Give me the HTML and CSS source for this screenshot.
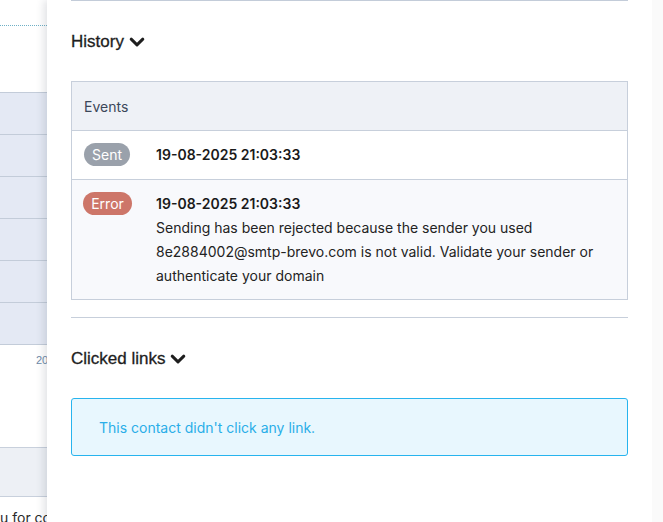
FILE: index.html
```html
<!DOCTYPE html>
<html>
<head>
<meta charset="utf-8">
<link rel="stylesheet" href="styles.css">
</head>
<body>
<div class="page">
  <div class="bg">
    <div class="bg-dots"></div>
    <div class="bg-rows">
      <div class="bg-row"></div>
      <div class="bg-row"></div>
      <div class="bg-row"></div>
      <div class="bg-row"></div>
      <div class="bg-row"></div>
      <div class="bg-row"></div>
    </div>
    <div class="bg-date">20</div>
    <div class="bg-footer"></div>
    <div class="bg-text">u for co</div>
  </div>
  <div class="drawer">
    <div class="section-top"></div>
    <h2 class="heading">History <svg class="chev" viewBox="0 0 16 11" width="16" height="11"><path d="M2.2 2.2 L8 7.8 L13.8 2.2" fill="none" stroke="#1e1e1e" stroke-width="3" stroke-linecap="round" stroke-linejoin="round"/></svg></h2>
    <div class="table">
      <div class="thead">Events</div>
      <div class="trow">
        <span class="badge badge-sent">Sent</span>
        <div class="tcell"><div class="date">19-08-2025 21:03:33</div></div>
      </div>
      <div class="trow trow-alt">
        <span class="badge badge-error">Error</span>
        <div class="tcell">
          <div class="date">19-08-2025 21:03:33</div>
          <div class="msg">Sending has been rejected because the sender you used 8e2884002@smtp-brevo.com is not valid. Validate your sender or authenticate your domain</div>
        </div>
      </div>
    </div>
    <div class="divider"></div>
    <h2 class="heading heading-2">Clicked links <svg class="chev" viewBox="0 0 16 11" width="16" height="11"><path d="M2.2 2.2 L8 7.8 L13.8 2.2" fill="none" stroke="#1e1e1e" stroke-width="3" stroke-linecap="round" stroke-linejoin="round"/></svg></h2>
    <div class="info">This contact didn't click any link.</div>
  </div>
  <div class="scrollbar"></div>
</div>
</body>
</html>
```

FILE: styles.css
```css
html, body {
  margin: 0;
  padding: 0;
  background: #ffffff;
}
.page {
  display: flex;
  width: 663px;
  height: 522px;
  overflow: hidden;
  font-family: Inter, "Liberation Sans", sans-serif;
}
.bg {
  width: 47px;
  flex: none;
  background: #ffffff;
  overflow: hidden;
}
.bg-dots {
  margin-top: 25px;
  height: 0;
  border-top: 1px dotted #6fb0c6;
}
.bg-rows {
  margin-top: 66px;
  border-top: 1px solid #c3ccd9;
}
.bg-row {
  height: 41px;
  background: #e4e9f4;
  border-bottom: 1px solid #c3ccd9;
}
.bg-date {
  font-family: "Liberation Sans", sans-serif;
  font-size: 11px;
  color: #6e8aa9;
  padding-left: 36px;
  margin-top: 8px;
  line-height: 14px;
  white-space: nowrap;
}
.bg-footer {
  margin-top: 80px;
  height: 48px;
  background: #edf0f5;
  border-top: 1px solid #c8d0dc;
  border-bottom: 1px solid #c8d0dc;
}
.bg-text {
  font-family: Inter, sans-serif;
  font-size: 14px;
  color: #2a2a2a;
  margin-top: 12px;
  line-height: 18px;
  white-space: nowrap;
}
.drawer {
  flex: 1;
  background: #ffffff;
  padding: 0 24px;
  box-shadow: -3px 0 8px rgba(40, 50, 70, 0.14);
  position: relative;
  z-index: 1;
}
.section-top {
  border-top: 1px solid #c3ccd9;
}
.heading {
  margin: 31px 0 0;
  font-family: "Liberation Sans", Arial, sans-serif;
  font-size: 17px;
  font-weight: normal;
  color: #1e1e1e;
  line-height: 20px;
  display: flex;
  align-items: center;
  gap: 5px;
  -webkit-text-stroke: 0.3px #1e1e1e;
}
.chev {
  display: block;
  margin-top: 1px;
}
.table {
  margin-top: 29px;
  border: 1px solid #c7cfdb;
}
.thead {
  height: 48px;
  background: #eef1f6;
  border-bottom: 1px solid #c7cfdb;
  font-size: 14px;
  color: #3b4759;
  padding-left: 12px;
  display: flex;
  align-items: center;
}
.trow {
  display: flex;
  align-items: flex-start;
  padding: 12px;
  min-height: 24px;
  background: #ffffff;
  border-bottom: 1px solid #c7cfdb;
}
.trow:last-child {
  border-bottom: none;
}
.trow-alt {
  background: #f8f9fc;
  padding-bottom: 11px;
  padding-left: 11px;
}
.badge {
  flex: none;
  height: 23px;
  border-radius: 12px;
  color: #ffffff;
  font-size: 14px;
  line-height: 23px;
  text-align: center;
}
.badge-sent {
  background: #9aa1ab;
  width: 46px;
}
.badge-error {
  background: #cd7669;
  width: 49px;
}
.tcell {
  margin-left: 26px;
  flex: 1;
}
.trow-alt .tcell {
  margin-left: 24px;
}
.date {
  font-size: 14px;
  font-weight: 600;
  color: #1a1a1a;
  line-height: 24px;
}
.msg {
  font-size: 14px;
  color: #232323;
  line-height: 24px;
}
.divider {
  margin-top: 17px;
  border-top: 1px solid #c7cfdb;
}
.heading-2 {
  margin-top: 31px;
}
.info {
  margin-top: 29px;
  height: 56px;
  border: 1px solid #27b4ee;
  border-radius: 3px;
  background: #e8f7fe;
  color: #2aaee8;
  font-size: 14px;
  display: flex;
  align-items: center;
  padding-left: 27px;
}
.scrollbar {
  width: 11px;
  flex: none;
  background: #fafafa;
  position: relative;
  z-index: 2;
}
```
